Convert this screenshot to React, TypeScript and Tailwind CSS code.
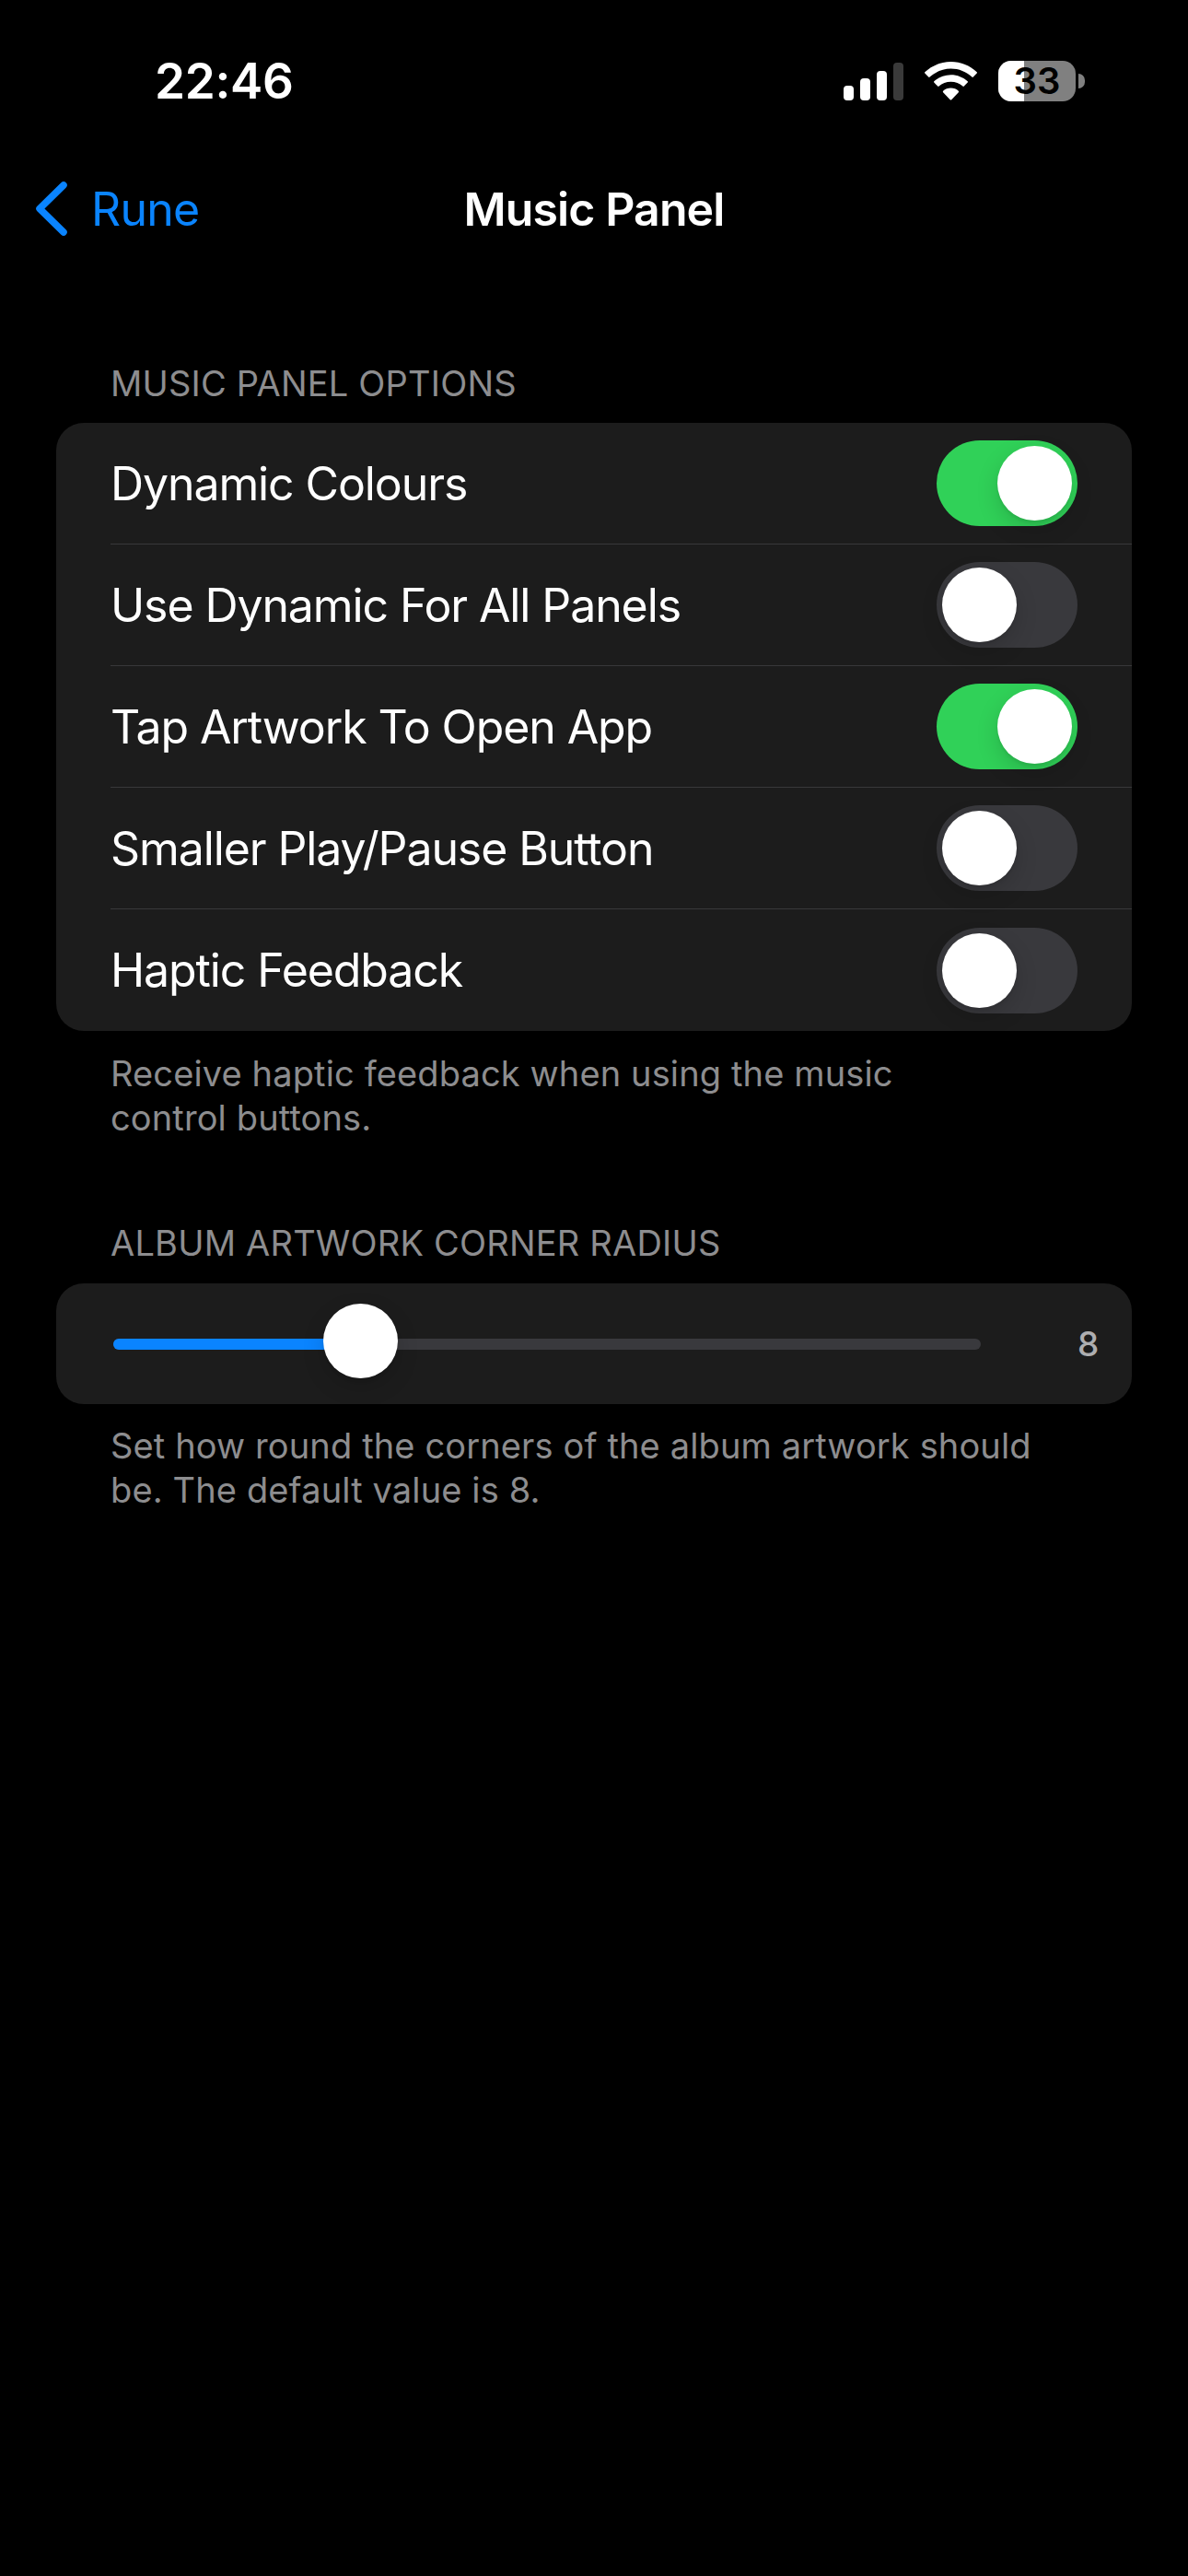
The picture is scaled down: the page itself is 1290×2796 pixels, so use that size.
import React from 'react';

const options = [
  { label: 'Dynamic Colours', on: true },
  { label: 'Use Dynamic For All Panels', on: false },
  { label: 'Tap Artwork To Open App', on: true },
  { label: 'Smaller Play/Pause Button', on: false },
  { label: 'Haptic Feedback', on: false },
];

function Toggle({ on }: { on: boolean }) {
  return (
    <div
      className={`flex h-[93px] w-[153px] shrink-0 items-center rounded-full px-[6px] ${
        on ? 'justify-end bg-[#30d158]' : 'justify-start bg-[#39393d]'
      }`}
    >
      <div className="h-[81px] w-[81px] rounded-full bg-white shadow-[0_9px_24px_rgba(0,0,0,0.15),0_3px_3px_rgba(0,0,0,0.06)]" />
    </div>
  );
}

function StatusIcons() {
  return (
    <div className="flex items-center">
      <svg width="65" height="41" viewBox="0 0 65 41" className="mr-[23px]">
        <rect x="0" y="25" width="11" height="16" rx="4" fill="#fff" />
        <rect x="18" y="17" width="11" height="24" rx="4" fill="#fff" />
        <rect x="36" y="9" width="11" height="32" rx="4" fill="#fff" />
        <rect x="54" y="0" width="11" height="41" rx="4" fill="#3a3a3a" />
      </svg>
      <svg width="57" height="42" viewBox="0 0 57 42" className="mr-[23px]">
        <path d="M28.5 0C17.6 0 7.8 4.2 0.3 11.2c-.4.4-.4 1 0 1.400l3.900 4c.4.4 1 .4 1.400 0C11.700 11 19.700 7.600 28.500 7.600s16.800 3.400 22.900 9c.4.4 1 .4 1.400 0l3.900-4c.4-.4.4-1 0-1.400C49.200 4.200 39.400 0 28.500 0z" fill="#fff" />
        <path d="M28.500 14.200c-7 0-13.400 2.700-18.200 7-.4.400-.4 1 0 1.400l3.900 4c.4.400 1 .4 1.400 0 3.400-3 7.900-4.800 12.900-4.800s9.500 1.800 12.900 4.800c.4.400 1 .4 1.400 0l3.900-4c.4-.4.4-1 0-1.400-4.800-4.300-11.200-7-18.100-7z" fill="#fff" />
        <path d="M28.500 28.600c-3.200 0-6.200 1.200-8.400 3.200-.4.400-.4 1 0 1.400l7.600 8c.4.400 1.100.4 1.500 0l7.600-8c.4-.4.4-1 0-1.400-2.100-2-5.100-3.200-8.300-3.200z" fill="#fff" />
      </svg>
      <div className="relative h-[44px] w-[84px] rounded-[14px] bg-[#808080]">
        <div className="h-full w-[28px] rounded-l-[14px] bg-white" />
        <span className="absolute inset-0 flex items-center justify-center text-[40px] font-semibold leading-[44px] text-black">
          33
        </span>
      </div>
      <div className="ml-[3px] h-[16px] w-[7px] rounded-r-full bg-[#808080]" />
    </div>
  );
}

export default function App() {
  return (
    <div className="flex min-h-[2796px] w-[1290px] flex-col bg-black font-['Inter',sans-serif] text-white">
      <div className="flex h-[176px] items-center justify-between pl-[168px] pr-[112px]">
        <span className="text-[53px] font-semibold leading-none tracking-[-0.3px]">22:46</span>
        <StatusIcons />
      </div>

      <div className="relative flex h-[102px] items-center justify-center">
        <div className="absolute left-[39px] top-[21px] flex items-center text-[#0a84ff]">
          <svg width="34" height="59" viewBox="0 0 34 59" fill="none">
            <path d="M30 4L4 29.500L30 55" stroke="#0a84ff" strokeWidth="7.500" strokeLinecap="round" strokeLinejoin="round" />
          </svg>
          <span className="ml-[26px] text-[50px] leading-none tracking-[-0.8px]">Rune</span>
        </div>
        <span className="text-[50px] font-semibold leading-none tracking-[-0.9px]">Music Panel</span>
      </div>

      <div className="pl-[120px] pt-[113px] text-[38px] leading-[50px] tracking-[0.2px] text-[#8d8d8f]">
        MUSIC PANEL OPTIONS
      </div>
      <div className="mx-[61px] mt-[18px] overflow-hidden rounded-[30px] bg-[#1c1c1c]">
        {options.map((o, i) => (
          <div key={o.label} className="h-[132px] pl-[59px]">
            <div
              className={`flex h-full items-center justify-between pr-[59px] ${
                i < options.length - 1 ? 'border-b-[1.5px] border-[#38383a]' : ''
              }`}
            >
              <span className="text-[50px] leading-none tracking-[-1.1px]">{o.label}</span>
              <Toggle on={o.on} />
            </div>
          </div>
        ))}
      </div>
      <p className="w-[1050px] pl-[120px] pt-[22px] text-[38px] leading-[48px] tracking-[0.13px] text-[#8d8d8f]">
        Receive haptic feedback when using the music control buttons.
      </p>

      <div className="pl-[120px] pt-[87px] text-[38px] leading-[50px] tracking-[0.2px] text-[#8d8d8f]">
        ALBUM ARTWORK CORNER RADIUS
      </div>
      <div className="mx-[61px] mt-[19px] flex h-[131px] items-center rounded-[30px] bg-[#1c1c1c] pl-[62px]">
        <div className="relative flex h-[12px] w-[942px] rounded-full bg-[#39393d]">
          <div className="h-full w-[240px] rounded-l-full bg-[#0a84ff]" />
          <div className="absolute left-[228px] top-[-38px] h-[81px] w-[81px] rounded-full bg-white shadow-[0_9px_24px_rgba(0,0,0,0.15),0_3px_3px_rgba(0,0,0,0.06)]" />
        </div>
        <span className="ml-[105px] text-[37px] font-medium leading-none text-[#aeaeb0]">8</span>
      </div>
      <p className="w-[1130px] pl-[120px] pt-[21px] text-[38px] leading-[48px] tracking-[0.13px] text-[#8d8d8f]">
        Set how round the corners of the album artwork should be. The default value is 8.
      </p>
    </div>
  );
}
